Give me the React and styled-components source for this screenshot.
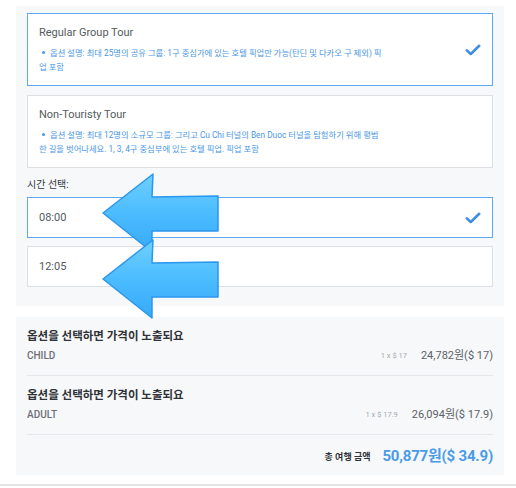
import React from "react";
import styled, { createGlobalStyle } from "styled-components";

const Global = createGlobalStyle`
  html, body { margin: 0; padding: 0; background: #ffffff; }
  body { font-family: "Roboto", "Noto Sans CJK KR", sans-serif; }
  * { box-sizing: border-box; }
`;

const Page = styled.div`
  position: relative;
  width: 516px;
  height: 488px;
  padding-top: 6px;
  overflow: hidden;
`;

const Panel = styled.div`
  width: 488px;
  margin-left: 16px;
  background: #f7f8fa;
  padding: ${(p) => p.$pad};
  display: flex;
  flex-direction: column;
`;

const OptionList = styled.div`
  display: flex;
  flex-direction: column;
  gap: ${(p) => p.$gap || "9px"};
`;

const Card = styled.div`
  background: #ffffff;
  border: 1px solid ${(p) => (p.$selected ? "#5ea8f2" : "#dcdfe4")};
  display: flex;
  align-items: center;
  justify-content: space-between;
  padding: ${(p) => p.$pad || "11px 11px"};
  min-height: ${(p) => p.$h || "auto"};
`;

const CardBody = styled.div`
  display: flex;
  flex-direction: column;
`;

const CardTitle = styled.div`
  font-size: 11px;
  line-height: 16px;
  color: #555a60;
  margin-bottom: 6px;
`;

const Desc = styled.div`
  font-size: 8.3px;
  line-height: 13.5px;
  color: #4a97e6;
  width: 345px;
  word-break: break-all;
`;

const Bullet = styled.span`
  display: inline-block;
  width: 3px;
  height: 3px;
  border-radius: 50%;
  background: #4a97e6;
  margin: 0 5px 2px 3px;
  vertical-align: middle;
`;

const Label = styled.div`
  font-size: 10px;
  line-height: 14px;
  color: #333840;
  margin: 10px 0 5px;
`;

const TimeText = styled.div`
  font-size: 11px;
  color: #555a60;
`;

const Check = () => (
  <svg width="16" height="12" viewBox="0 0 16 12">
    <path d="M1.8 6.4 L5.8 10 L14.2 1.8" fill="none" stroke="#3e8fe2" strokeWidth="2.6" strokeLinecap="round" strokeLinejoin="round" />
  </svg>
);

const Gap = styled.div`
  height: 11px;
`;

const Section = styled.div`
  padding: 12px 0 12px;
  border-bottom: 1px solid ${(p) => (p.$line ? "#e6e8eb" : "transparent")};
  display: flex;
  flex-direction: column;
  gap: 6px;
`;

const SectionTitle = styled.div`
  font-size: 11.5px;
  line-height: 14px;
  font-weight: 700;
  color: #2f3338;
`;

const Row = styled.div`
  display: flex;
  align-items: center;
  line-height: 14px;
`;

const Kind = styled.div`
  flex: 1;
  font-size: 10px;
  color: #6b7078;
  font-weight: 500;
`;

const Unit = styled.div`
  font-size: 7.5px;
  color: #a3a8ae;
  margin-right: 14px;
`;

const Price = styled.div`
  font-size: 11px;
  color: #5c6167;
`;

const TotalRow = styled.div`
  display: flex;
  justify-content: flex-end;
  align-items: center;
  gap: 12px;
  padding: 11px 0 9px;
`;

const TotalLabel = styled.div`
  font-size: 9px;
  font-weight: 700;
  color: #2f3338;
`;

const TotalValue = styled.div`
  font-size: 15px;
  letter-spacing: -0.2px;
  line-height: 20px;
  font-weight: 700;
  color: #4a9be8;
`;

const Rule = styled.div`
  position: absolute;
  left: 0;
  right: 0;
  top: 484px;
  height: 2px;
  background: #e2e3e5;
`;

const Overlay = styled.svg`
  position: absolute;
  left: 0;
  top: 0;
  pointer-events: none;
`;

const arrowPts = (dy) =>
  [
    [103, 213],
    [153, 174],
    [152, 197],
    [218, 196],
    [218, 231],
    [152, 231],
    [152, 252],
  ]
    .map(([x, y]) => `${x},${y + dy}`)
    .join(" ");

export default function App() {
  return (
    <>
      <Global />
      <Page>
        <Panel $pad="7px 11px 19px">
          <OptionList>
            <Card $selected>
              <CardBody>
                <CardTitle>Regular Group Tour</CardTitle>
                <Desc>
                  <Bullet />
                  옵션 설명: 최대 25명의 공유 그룹: 1구 중심가에 있는 호텔 픽업만 가능(탄딘 및 다카오 구 제외) 픽업 포함
                </Desc>
              </CardBody>
              <Check />
            </Card>
            <Card>
              <CardBody>
                <CardTitle>Non-Touristy Tour</CardTitle>
                <Desc>
                  <Bullet />
                  옵션 설명: 최대 12명의 소규모 그룹: 그리고 Cu Chi 터널의 Ben Duoc 터널을 탐험하기 위해 평범한 길을 벗어나세요. 1, 3, 4구 중심부에 있는 호텔 픽업. 픽업 포함
                </Desc>
              </CardBody>
            </Card>
          </OptionList>
          <Label>시간 선택:</Label>
          <OptionList $gap="8px">
            <Card $selected $pad="0 11px" $h="41px">
              <TimeText>08:00</TimeText>
              <Check />
            </Card>
            <Card $pad="0 11px" $h="41px">
              <TimeText>12:05</TimeText>
            </Card>
          </OptionList>
        </Panel>
        <Gap />
        <Panel $pad="0 11px">
          <Section $line>
            <SectionTitle>옵션을 선택하면 가격이 노출되요</SectionTitle>
            <Row>
              <Kind>CHILD</Kind>
              <Unit>1 x $ 17</Unit>
              <Price>24,782원($ 17)</Price>
            </Row>
          </Section>
          <Section $line>
            <SectionTitle>옵션을 선택하면 가격이 노출되요</SectionTitle>
            <Row>
              <Kind>ADULT</Kind>
              <Unit>1 x $ 17.9</Unit>
              <Price>26,094원($ 17.9)</Price>
            </Row>
          </Section>
          <TotalRow>
            <TotalLabel>총 여행 금액</TotalLabel>
            <TotalValue>50,877원($ 34.9)</TotalValue>
          </TotalRow>
        </Panel>
        <Rule />
        <Overlay width="516" height="488" viewBox="0 0 516 488">
          <defs>
            <linearGradient id="ag" x1="0" y1="0" x2="0" y2="1">
              <stop offset="0" stopColor="#6fd0ff" />
              <stop offset="0.5" stopColor="#4cbcff" />
              <stop offset="1" stopColor="#36aaf8" />
            </linearGradient>
          </defs>
          <polygon points={arrowPts(0)} fill="url(#ag)" stroke="#2b97ee" strokeWidth="1.5" strokeLinejoin="round" />
          <polygon points={arrowPts(66)} fill="url(#ag)" stroke="#2b97ee" strokeWidth="1.5" strokeLinejoin="round" />
        </Overlay>
      </Page>
    </>
  );
}
